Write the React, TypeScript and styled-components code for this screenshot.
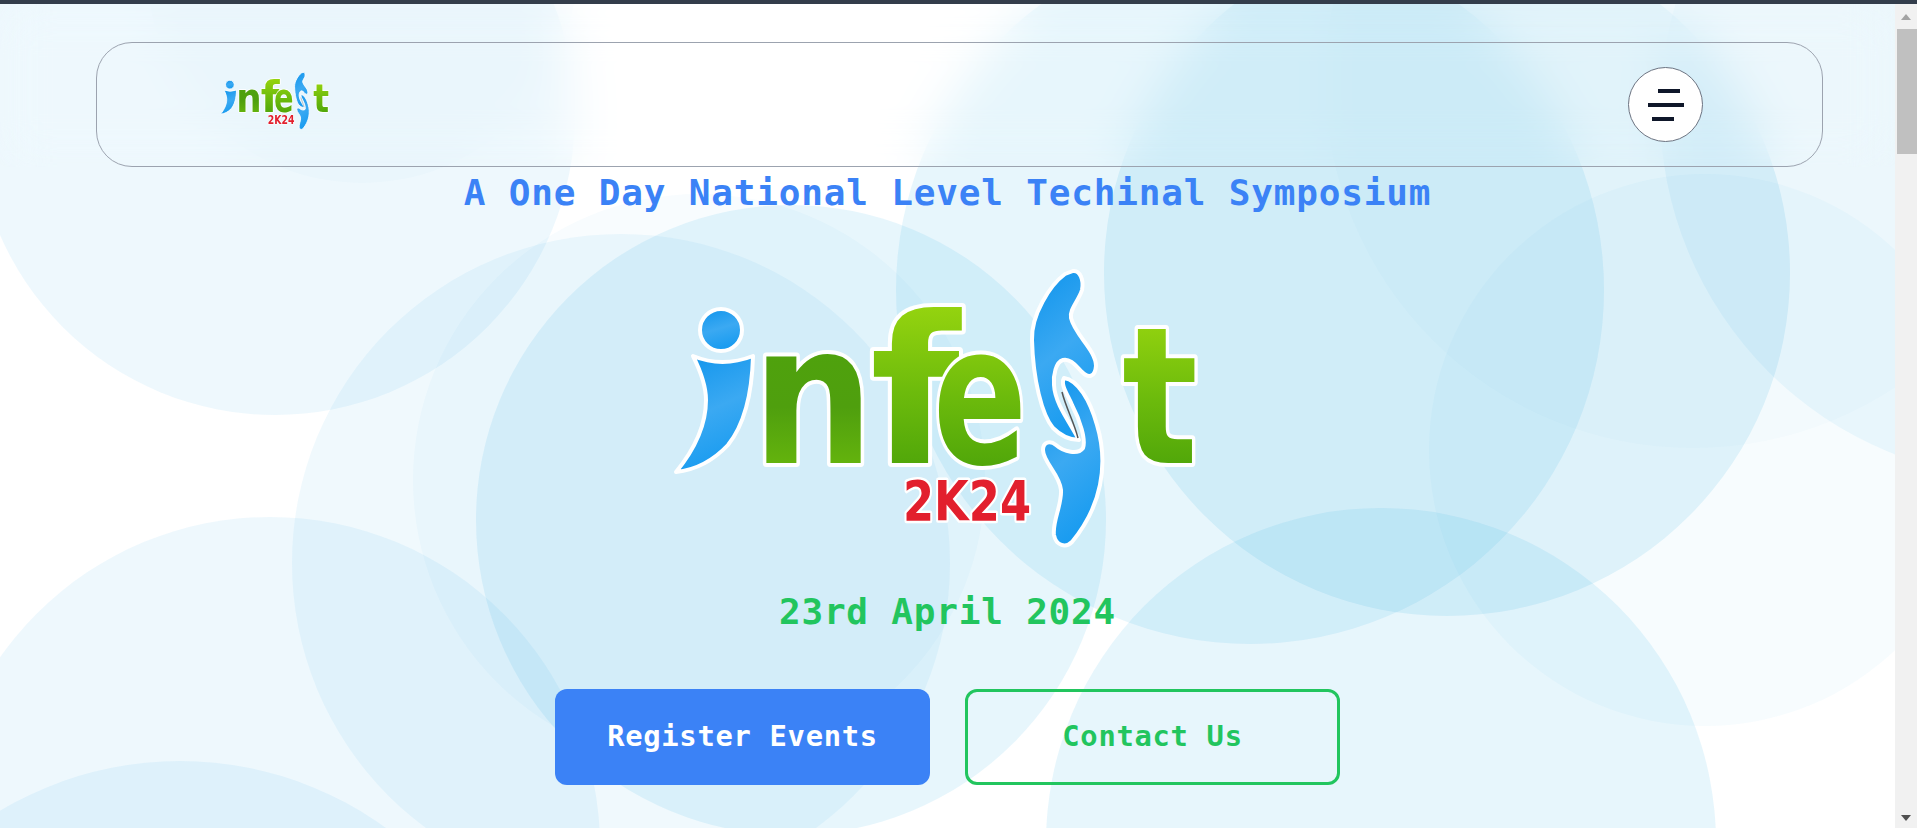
import React from "react";
import styled, { createGlobalStyle } from "styled-components";

const Global = createGlobalStyle`
  html, body { margin: 0; padding: 0; height: 100%; overflow: hidden; background: #fff; }
  #root { height: 100%; }
`;

const Shell = styled.div`
  display: flex;
  flex-direction: column;
  height: 828px;
`;
const TopEdge = styled.div`
  height: 4px;
  flex: none;
  background: #333d4b;
`;
const Viewport = styled.div`
  display: flex;
  flex: 1;
  min-height: 0;
`;
const Page = styled.main`
  position: relative;
  flex: 1;
  min-width: 0;
  overflow: hidden;
  background: #fff;
  font-family: "DejaVu Sans Mono", "Liberation Mono", monospace;
`;
const Bubbles = styled.svg`
  position: absolute;
  inset: 0;
  width: 100%;
  height: 100%;
`;
const Bubble = styled.circle<{ $a: number }>`
  fill: rgba(40, 170, 225, ${(p) => p.$a});
`;
const Header = styled.header`
  position: relative;
  padding: 38px 72px 0 96px;
  backdrop-filter: blur(24px);
`;
const Nav = styled.nav`
  display: flex;
  align-items: center;
  justify-content: space-between;
  height: 125px;
  box-sizing: border-box;
  padding: 0 119px 0 116px;
  border: 1px solid #9ca3af;
  border-radius: 36px;
`;
const MenuButton = styled.button`
  display: flex;
  flex-direction: column;
  align-items: flex-start;
  justify-content: center;
  gap: 10px;
  width: 75px;
  height: 75px;
  box-sizing: border-box;
  padding: 0 0 0 19px;
  background: #fff;
  border: 1px solid #6b7280;
  border-radius: 50%;
`;
const MenuBar = styled.span<{ $w: number; $o: number }>`
  display: block;
  height: 4px;
  width: ${(p) => p.$w}px;
  margin-left: ${(p) => p.$o}px;
  background: #0f172a;
`;
const Hero = styled.section`
  position: relative;
  display: flex;
  flex-direction: column;
  align-items: center;
`;
const Title = styled.h1`
  margin: 6px 0 0;
  font-size: 36px;
  line-height: 40px;
  font-weight: 700;
  letter-spacing: 0.83px;
  color: #3b82f6;
`;
const DateLine = styled.h2`
  margin: 22px 0 0;
  font-size: 36px;
  line-height: 40px;
  font-weight: 700;
  letter-spacing: 0.8px;
  color: #22c55e;
`;
const Actions = styled.div`
  display: flex;
  gap: 35px;
  margin-top: 57px;
`;
const Action = styled.a<{ $outline?: boolean }>`
  display: flex;
  align-items: center;
  justify-content: center;
  width: 375px;
  height: 96px;
  box-sizing: border-box;
  padding-bottom: 2px;
  border-radius: 12px;
  font-size: 28.8px;
  font-weight: 700;
  letter-spacing: 0.7px;
  background: ${(p) => (p.$outline ? "transparent" : "#3b82f6")};
  color: ${(p) => (p.$outline ? "#22c55e" : "#fff")};
  border: ${(p) => (p.$outline ? "3px solid #22c55e" : "none")};
`;
const Scrollbar = styled.aside`
  display: flex;
  flex-direction: column;
  align-items: flex-end;
  justify-content: space-between;
  width: 22px;
  flex: none;
  background: #f1f1f1;
`;
const ThumbArea = styled.div`
  width: 100%;
  display: flex;
  flex-direction: column;
  align-items: flex-end;
`;
const ArrowUp = styled.span`
  align-self: center;
  width: 0;
  height: 0;
  margin: 10px 0 9px;
  border-left: 5.5px solid transparent;
  border-right: 5.5px solid transparent;
  border-bottom: 6px solid #a3a3a3;
`;
const Thumb = styled.div`
  width: 20px;
  height: 125px;
  background: #c0c0c0;
`;
const ArrowDown = styled.span`
  align-self: center;
  width: 0;
  height: 0;
  margin-bottom: 7px;
  border-left: 5.5px solid transparent;
  border-right: 5.5px solid transparent;
  border-top: 6px solid #505050;
`;
const LogoSvg = styled.svg<{ $small?: boolean }>`
  display: block;
  flex: none;
  width: ${(p) => (p.$small ? 128 : 615)}px;
  height: ${(p) => (p.$small ? 66.6 : 320)}px;
  margin: ${(p) => (p.$small ? "0 0 7px" : "37px 0 0")};
`;
const LogoLetter = styled.text`
  font-family: "DejaVu Sans", "Liberation Sans", sans-serif;
  font-weight: 700;
  paint-order: stroke;
  stroke: #fff;
  stroke-width: 8px;
  stroke-linejoin: round;
`;
const LogoYear = styled.text`
  font-family: "DejaVu Sans", "Liberation Sans", sans-serif;
  font-weight: 700;
  font-size: 55px;
  fill: #e21f2d;
  paint-order: stroke;
  stroke: #fff;
  stroke-width: 5px;
  stroke-linejoin: round;
`;
const LogoShape = styled.path`
  stroke: #fff;
  stroke-width: 4px;
  stroke-linejoin: round;
`;

const circles: [number, number, number, number][] = [
  [275, 115, 300, 0.08],
  [362, -32, 215, 0.02],
  [621, 563, 329, 0.07],
  [791, 520, 315, 0.11],
  [699, 480, 286, 0.03],
  [270, 847, 330, 0.08],
  [180, 1111, 350, 0.08],
  [1250, 290, 354, 0.11],
  [1447, 273, 343, 0.12],
  [1381, 843, 335, 0.11],
  [1705, 450, 276, 0.04],
  [2030, 110, 370, 0.07],
  [1693, 80, 368, 0.02],
];

function Logo({ small }: { small?: boolean }) {
  return (
    <LogoSvg $small={small} viewBox="640 250 615 320">
      <defs>
        <linearGradient id="lg-blue" x1="0" y1="0" x2="0.3" y2="1">
          <stop offset="0" stopColor="#0f94ec" />
          <stop offset="0.55" stopColor="#3ba9f2" />
          <stop offset="1" stopColor="#1a9cf0" />
        </linearGradient>
        <linearGradient id="lg-green" x1="0" y1="0" x2="0" y2="1">
          <stop offset="0" stopColor="#a4dd10" />
          <stop offset="0.5" stopColor="#6dbb0c" />
          <stop offset="1" stopColor="#3f9a08" />
        </linearGradient>
        <linearGradient id="lg-green-n" x1="0" y1="0" x2="0" y2="1">
          <stop offset="0" stopColor="#4fa50c" />
          <stop offset="0.55" stopColor="#4f9f0e" />
          <stop offset="1" stopColor="#74c30c" />
        </linearGradient>
      </defs>
      <circle cx="721" cy="330" r="21" fill="url(#lg-blue)" stroke="#fff" strokeWidth="4" />
      <LogoShape
        fill="url(#lg-blue)"
        d="M693 356 Q722 368 753 356 C752 395 744 425 728 445 C712 462 695 470 676 472 C694 450 706 425 706 400 C706 385 699 368 693 356Z"
      />
      <LogoLetter x="752" y="463" fontSize="195" fill="url(#lg-green-n)" textLength="122" lengthAdjust="spacingAndGlyphs">n</LogoLetter>
      <LogoLetter x="870" y="463" fontSize="205" fill="url(#lg-green)" textLength="90" lengthAdjust="spacingAndGlyphs">f</LogoLetter>
      <LogoLetter x="933" y="463" fontSize="195" fill="url(#lg-green)" textLength="94" lengthAdjust="spacingAndGlyphs">e</LogoLetter>
      <LogoLetter x="1122" y="463" fontSize="190" fill="url(#lg-green)" textLength="76" lengthAdjust="spacingAndGlyphs">t</LogoLetter>
      <LogoShape
        fill="url(#lg-blue)"
        d="M1073 271 C1080 270 1084 280 1082 290 C1079 300 1069 310 1071 318 C1075 335 1096 350 1096 366 C1095 378 1088 378 1082 372 C1076 366 1070 358 1063 360 C1056 362 1053 375 1054 385 C1055 405 1072 425 1079 440 C1068 440 1060 435 1053 428 C1042 415 1033 380 1032 340 C1031 315 1050 285 1065 274 Z"
      />
      <LogoShape
        fill="url(#lg-blue)"
        d="M1064 378 C1078 380 1090 400 1097 425 C1103 445 1104 465 1100 485 C1096 505 1086 525 1072 542 C1066 548 1056 546 1054 535 C1052 522 1062 505 1061 490 C1060 475 1043 462 1043 450 C1043 442 1050 440 1056 445 C1064 452 1078 455 1083 448 C1086 440 1080 420 1072 405 C1068 395 1060 385 1064 378 Z"
      />
      <path d="M1062 392 C1066 408 1074 422 1078 438" fill="none" stroke="#555" strokeWidth="1.5" />
      <LogoYear x="903" y="520" textLength="128" lengthAdjust="spacingAndGlyphs">2K24</LogoYear>
    </LogoSvg>
  );
}

export default function App() {
  return (
    <Shell>
      <Global />
      <TopEdge />
      <Viewport>
        <Page>
          <Bubbles viewBox="0 4 1895 824" preserveAspectRatio="none">
            {circles.map(([cx, cy, r, a], i) => (
              <Bubble key={i} cx={cx} cy={cy} r={r} $a={a} />
            ))}
          </Bubbles>
          <Header>
            <Nav>
              <Logo small />
              <MenuButton aria-label="Menu">
                <MenuBar $w={22} $o={10} />
                <MenuBar $w={36} $o={0} />
                <MenuBar $w={22} $o={4} />
              </MenuButton>
            </Nav>
          </Header>
          <Hero>
            <Title>A One Day National Level Techinal Symposium</Title>
            <Logo />
            <DateLine>23rd April 2024</DateLine>
            <Actions>
              <Action>Register Events</Action>
              <Action $outline>Contact Us</Action>
            </Actions>
          </Hero>
        </Page>
        <Scrollbar>
          <ThumbArea>
            <ArrowUp />
            <Thumb />
          </ThumbArea>
          <ArrowDown />
        </Scrollbar>
      </Viewport>
    </Shell>
  );
}
